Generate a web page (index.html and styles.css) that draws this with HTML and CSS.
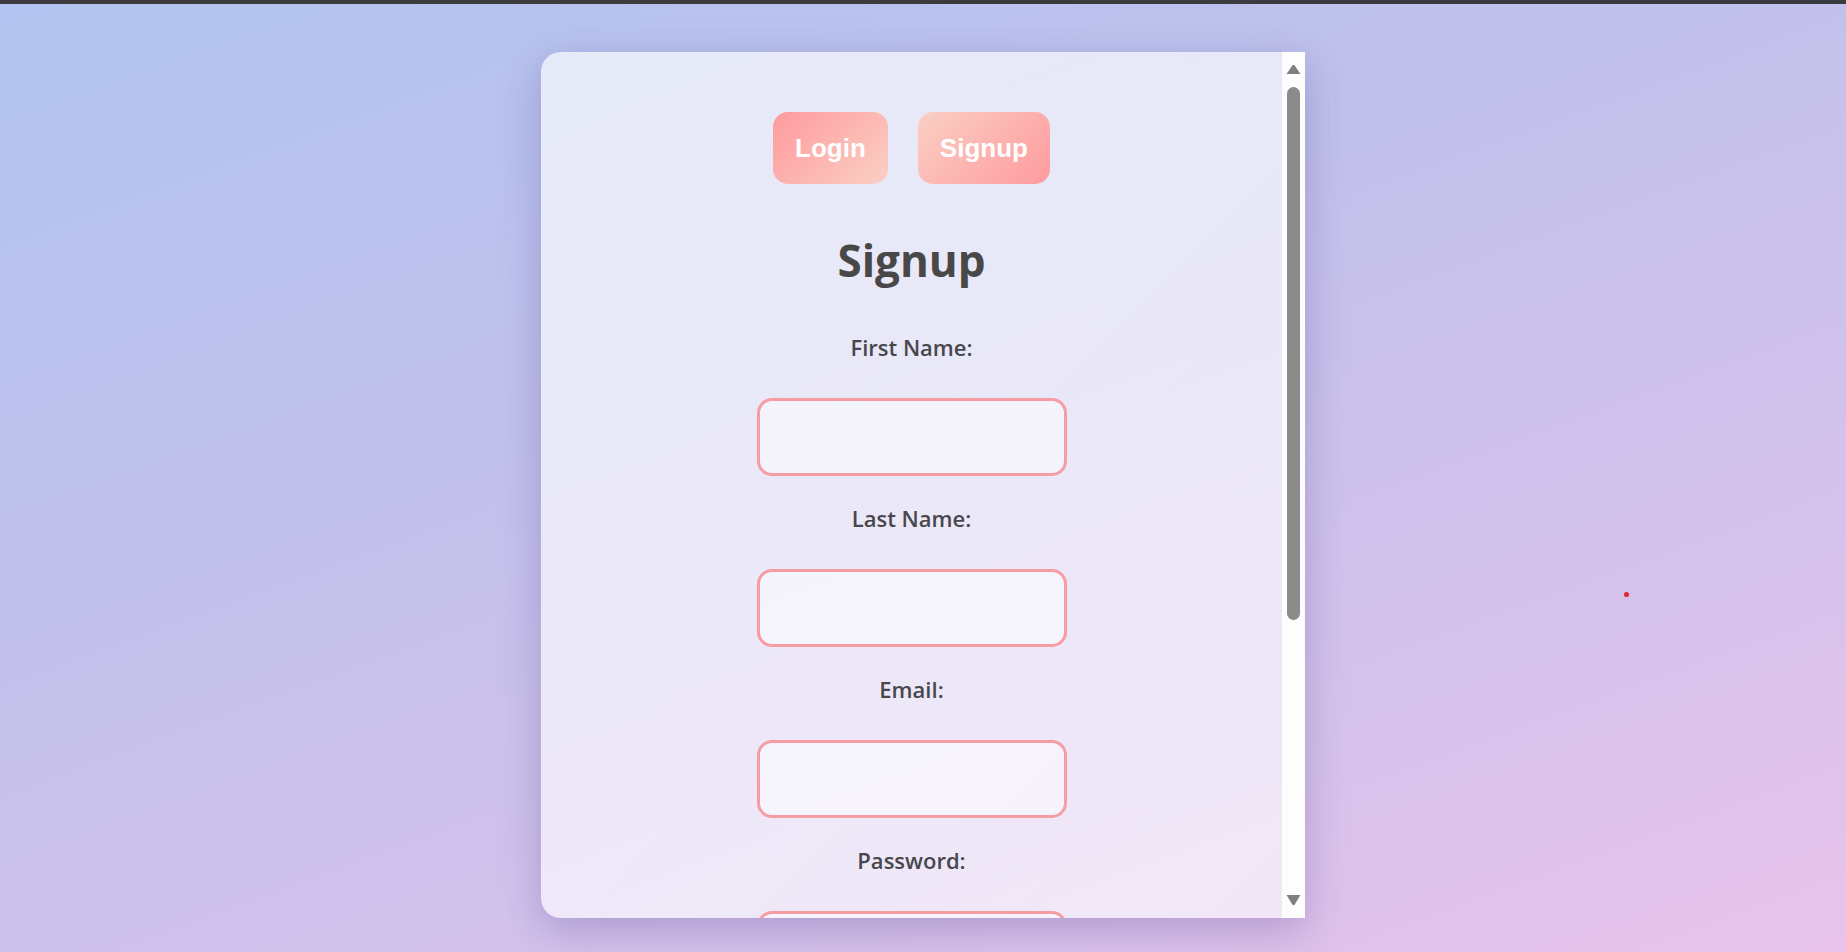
FILE: index.html
```html
<!DOCTYPE html>
<html lang="en">
<head>
<meta charset="utf-8">
<title>Signup</title>
<link rel="stylesheet" href="styles.css">
</head>
<body>
<div class="topbar"></div>
<main class="stage">
  <section class="card">
    <div class="content">
      <div class="tabs">
        <button class="tab tab-login" type="button">Login</button>
        <button class="tab tab-signup" type="button">Signup</button>
      </div>
      <h1 class="title">Signup</h1>
      <form class="form">
        <div class="field">
          <label class="label" for="fn">First Name:</label>
          <input class="input" id="fn" type="text">
        </div>
        <div class="field">
          <label class="label" for="ln">Last Name:</label>
          <input class="input" id="ln" type="text">
        </div>
        <div class="field">
          <label class="label" for="em">Email:</label>
          <input class="input" id="em" type="email">
        </div>
        <div class="field">
          <label class="label" for="pw">Password:</label>
          <input class="input" id="pw" type="password">
        </div>
      </form>
    </div>
    <div class="scrollbar" aria-hidden="true">
      <div class="sb-btn">
        <svg width="23" height="30" viewBox="0 0 23 30"><path d="M4.5 22 L10.3 13.6 Q11.5 12 12.7 13.6 L18.5 22 Z" fill="#808080"/></svg>
      </div>
      <div class="sb-track"><div class="sb-thumb"></div></div>
      <div class="sb-btn">
        <svg width="23" height="30" viewBox="0 0 23 30"><path d="M4.5 7 L18.5 7 L12.7 16.4 Q11.5 18 10.3 16.4 Z" fill="#808080"/></svg>
      </div>
    </div>
  </section>
  <span class="dot"></span>
</main>
</body>
</html>
```

FILE: styles.css
```css
html, body {
  margin: 0;
  padding: 0;
}
body {
  height: 952px;
  overflow: hidden;
  background: linear-gradient(160deg, #b1c4ef 0%, #c2c1ec 40%, #d6c2ec 75%, #e8c3eb 100%);
  font-family: "Open Sans", "Noto Sans", sans-serif;
}
.topbar {
  height: 4px;
  background: #3b3b3d;
}
.stage {
  position: relative;
  height: 948px;
  padding-top: 48px;
  box-sizing: border-box;
}
.card {
  width: 764px;
  height: 866px;
  margin: 0 auto;
  display: flex;
  border-radius: 20px 0 0 20px;
  background: linear-gradient(135deg, rgba(255,255,255,0.66), rgba(255,255,255,0.6));
  box-shadow: 0 12px 40px rgba(70, 50, 130, 0.28);
  overflow: hidden;
}
.content {
  flex: 1;
  min-width: 0;
  overflow: hidden;
  padding-top: 60px;
  display: flex;
  flex-direction: column;
  align-items: center;
}
.scrollbar {
  width: 23px;
  flex-shrink: 0;
  background: #fdfdfd;
  display: flex;
  flex-direction: column;
}
.sb-btn {
  height: 30px;
  flex-shrink: 0;
}
.sb-btn svg {
  display: block;
}
.sb-track {
  flex: 1;
  padding: 5px;
}
.sb-thumb {
  height: 533px;
  border-radius: 7px;
  background: #8b8b8b;
}
.tabs {
  display: flex;
  gap: 30px;
  flex-shrink: 0;
}
.tab {
  height: 72px;
  padding: 0 22px;
  border: none;
  border-radius: 15px;
  color: #ffffff;
  font-family: "Liberation Sans", Arial, sans-serif;
  font-weight: 700;
  font-size: 26px;
  line-height: 30px;
  cursor: pointer;
}
.tab-login {
  background: linear-gradient(135deg, #ff9a9e 0%, #fad0c4 100%);
}
.tab-signup {
  background: linear-gradient(135deg, #fad0c4 0%, #ff9a9e 100%);
}
.title {
  margin: 50px 0 0;
  font-size: 44px;
  line-height: 52px;
  font-weight: 700;
  color: #484848;
  flex-shrink: 0;
}
.form {
  margin-top: 46px;
  display: flex;
  flex-direction: column;
  align-items: center;
  gap: 27px;
  flex-shrink: 0;
}
.field {
  display: flex;
  flex-direction: column;
  align-items: center;
  gap: 36px;
}
.label {
  font-size: 22px;
  line-height: 30px;
  font-weight: 600;
  color: #48474d;
}
.input {
  width: 310px;
  height: 78px;
  box-sizing: border-box;
  border: 3px solid #f59da3;
  border-radius: 15px;
  background: rgba(255, 255, 255, 0.5);
  outline: none;
}
.dot {
  position: absolute;
  left: 1624px;
  top: 588px;
  width: 5px;
  height: 5px;
  border-radius: 50%;
  background: #e3262b;
}
```
